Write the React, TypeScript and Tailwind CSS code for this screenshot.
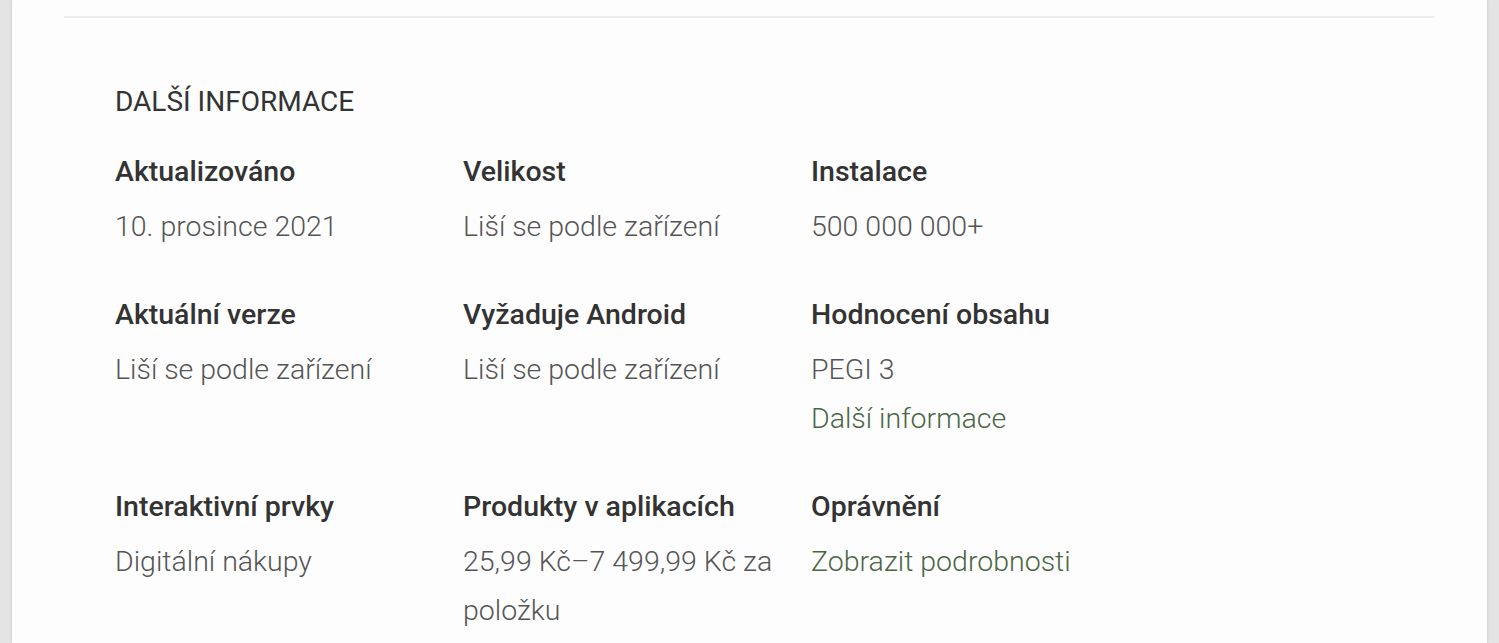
import React from 'react';

type Item = {
  label: string;
  values: string[];
  link?: string;
};

const items: Item[] = [
  { label: 'Aktualizováno', values: ['10. prosince 2021'] },
  { label: 'Velikost', values: ['Liší se podle zařízení'] },
  { label: 'Instalace', values: ['500 000 000+'] },
  { label: 'Aktuální verze', values: ['Liší se podle zařízení'] },
  { label: 'Vyžaduje Android', values: ['Liší se podle zařízení'] },
  { label: 'Hodnocení obsahu', values: ['PEGI 3'], link: 'Další informace' },
  { label: 'Interaktivní prvky', values: ['Digitální nákupy'] },
  { label: 'Produkty v aplikacích', values: ['25,99 Kč–7 499,99 Kč za položku'] },
  { label: 'Oprávnění', values: [], link: 'Zobrazit podrobnosti' },
];

export default function App() {
  return (
    <div className="h-[643px] w-full bg-[#e4e4e4] px-[12px] font-['Roboto',sans-serif] overflow-hidden">
      <div className="h-full bg-[#fdfdfd] shadow-[0_0_3px_rgba(0,0,0,0.15)]">
        <div className="pt-[16px] px-[52px]">
          <div className="h-[2px] bg-[#eeeeee]" />
        </div>

        <div className="pl-[103px] pt-[66px]">
          <h2 className="text-[28px] leading-[36px] text-[#333333] uppercase">
            Další informace
          </h2>

          <div className="mt-[34px] grid grid-cols-[348px_348px_348px] gap-y-[46px]">
            {items.map((item) => (
              <div key={item.label}>
                <div className="text-[28.5px] leading-[36px] font-medium text-[#333333]">
                  {item.label}
                </div>
                <div className="mt-[12px] w-[330px] text-[28.5px] leading-[49px] font-light text-[#555555]">
                  {item.values.map((v) => (
                    <div key={v}>{v}</div>
                  ))}
                  {item.link && (
                    <div className="text-[#4c6645]">{item.link}</div>
                  )}
                </div>
              </div>
            ))}
          </div>
        </div>
      </div>
    </div>
  );
}
